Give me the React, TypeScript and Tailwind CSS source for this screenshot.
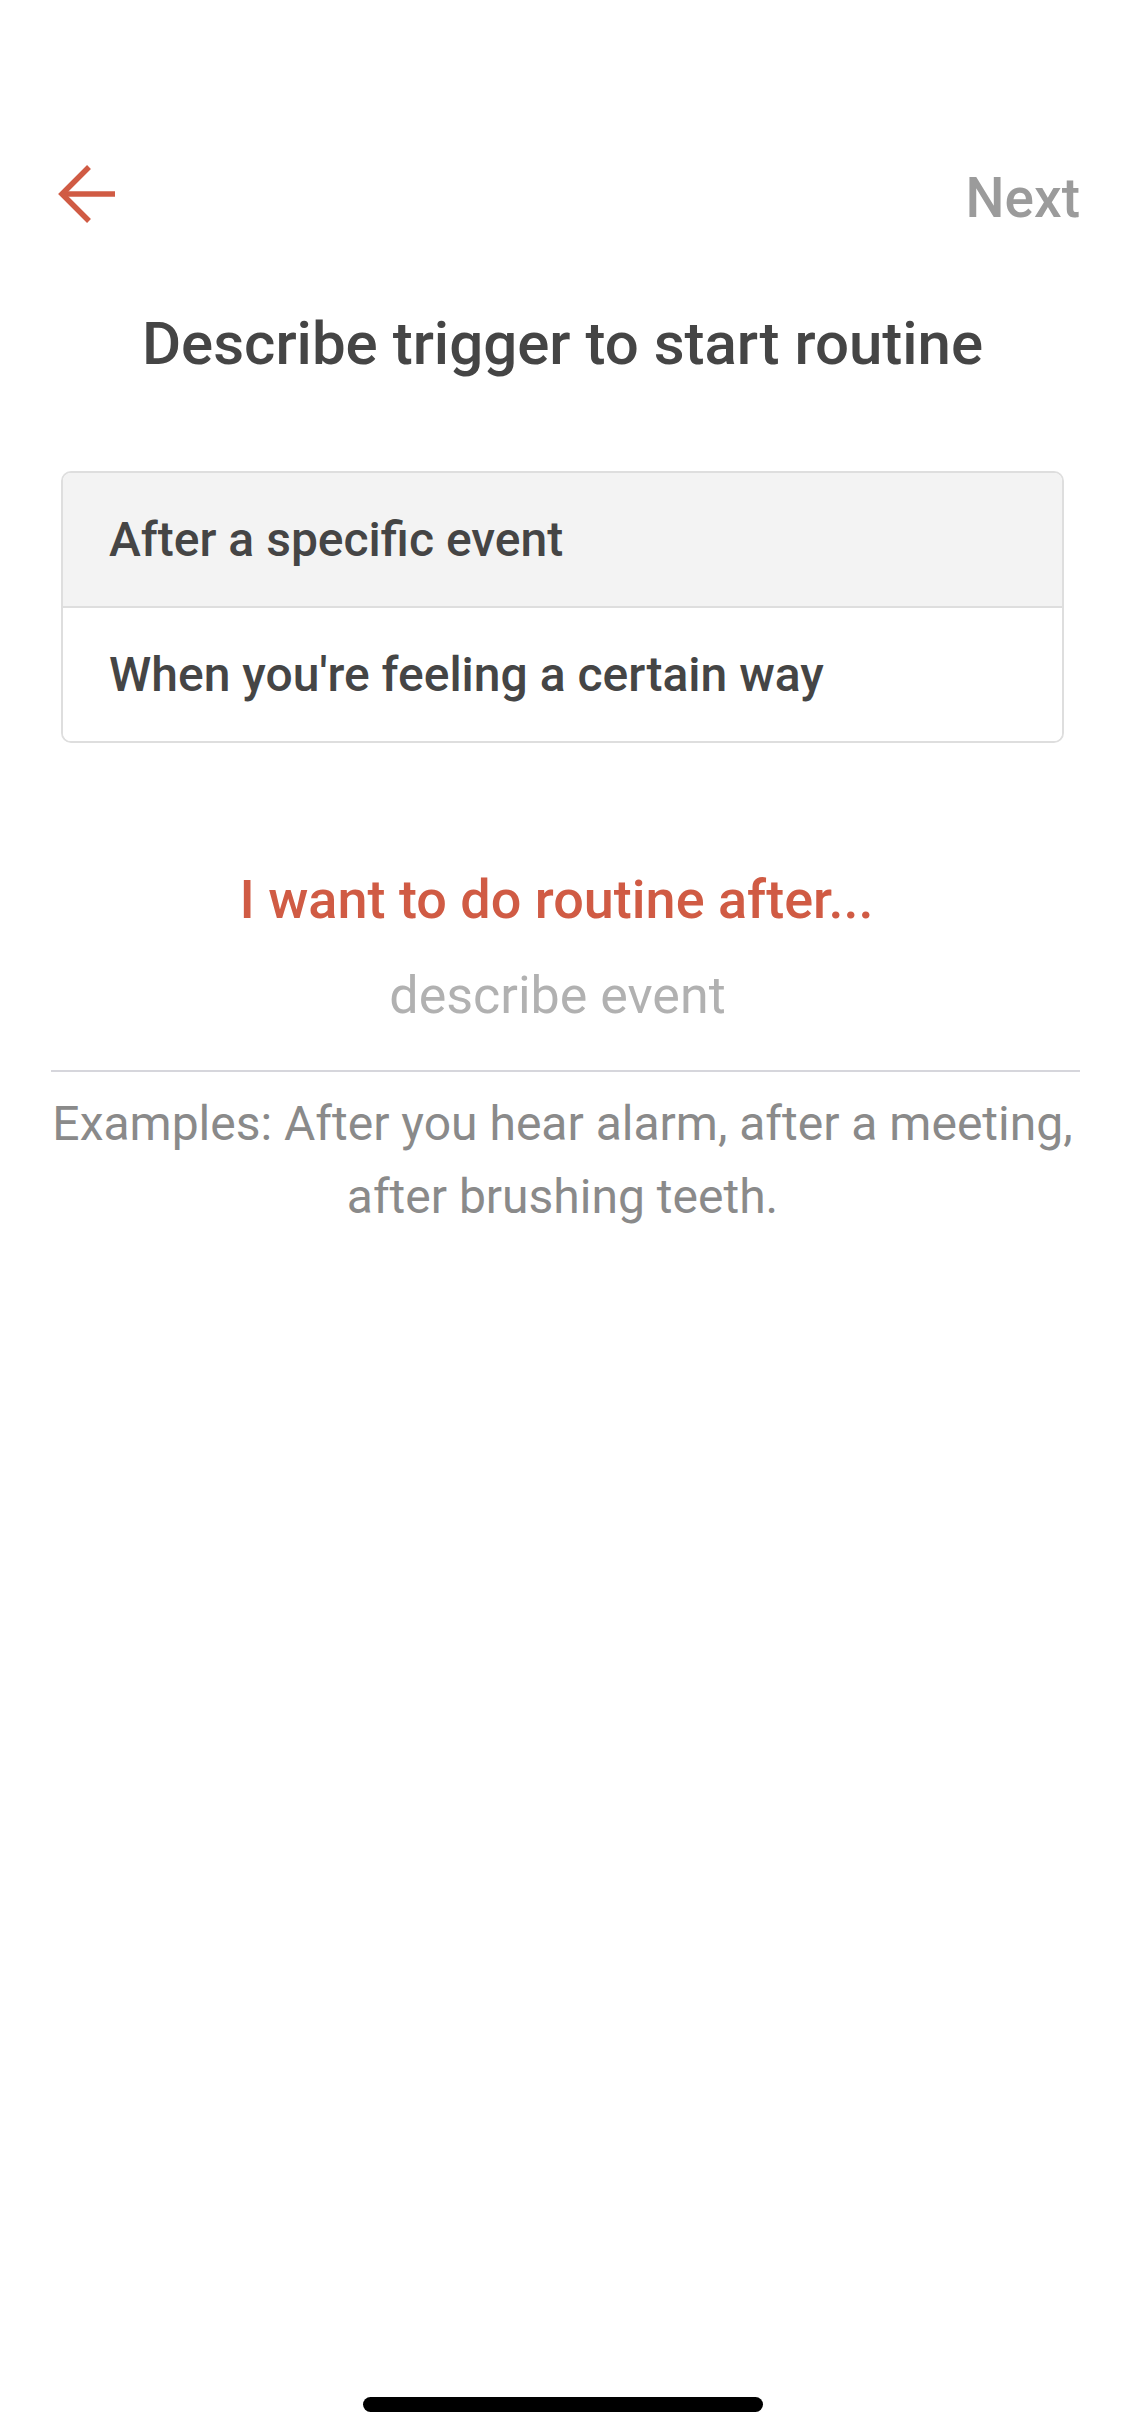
import React from "react";

export default function App() {
  return (
    <div
      className="relative flex h-[2436px] w-[1125px] flex-col bg-white"
      style={{ fontFamily: "Roboto, 'Noto Sans', Arial, sans-serif" }}
    >
      {/* Header */}
      <div className="mt-[150px] flex items-start justify-between pl-[58px] pr-[45px]">
        <svg
          className="mt-[14px] block"
          width="60"
          height="60"
          viewBox="0 0 60 60"
          fill="none"
          stroke="#d05b44"
          strokeWidth="5.5"
          strokeLinejoin="miter"
        >
          <path d="M31 3 L4 30 L31 57" />
          <path d="M5 30 H57" />
        </svg>
        <div className="mt-[17px] text-[55px] font-medium leading-[62px] text-[#9b9b9b]">
          Next
        </div>
      </div>

      {/* Title */}
      <div className="mt-[80px] text-center text-[60px] font-medium leading-[70px] text-[#454545]">
        Describe trigger to start routine
      </div>

      {/* Options box */}
      <div className="mx-[61px] mt-[92px] overflow-hidden rounded-[10px] border-2 border-[#dedede]">
        <div className="bg-[#f3f3f3] pl-[46px] text-[48px] font-medium leading-[133px] text-[#454545]">
          After a specific event
        </div>
        <div className="h-[2px] bg-[#dedede]" />
        <div className="bg-white pl-[46px] text-[48px] font-medium leading-[133px] text-[#454545]">
          When you're feeling a certain way
        </div>
      </div>

      {/* Prompt */}
      <div className="mt-[124px] pr-[12px] text-center text-[54px] font-medium leading-[66px] text-[#d05b44]">
        I want to do routine after...
      </div>
      <div className="mt-[33px] pr-[10px] text-center text-[52px] font-normal leading-[60px] text-[#b1b1b1]">
        describe event
      </div>
      <div className="ml-[51px] mr-[45px] mt-[44px] h-[2px] bg-[#d6d6dc]" />
      <div className="mt-[15px] px-[40px] text-center text-[48px] font-normal leading-[73px] text-[#8a8a8a]">
        Examples: After you hear alarm, after a meeting,
        <br />
        after brushing teeth.
      </div>

      <div className="flex-1" />

      {/* Home indicator */}
      <div className="mb-[24px] flex justify-center">
        <div className="h-[15px] w-[400px] rounded-full bg-black" />
      </div>
    </div>
  );
}
